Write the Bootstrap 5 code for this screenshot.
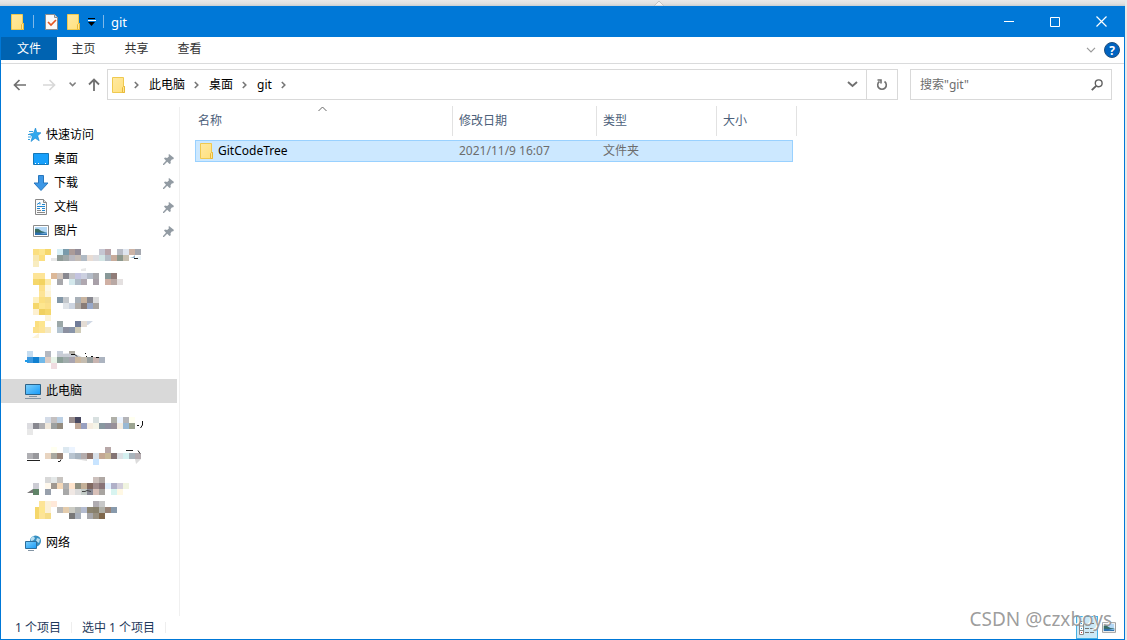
<!DOCTYPE html>
<html lang="zh-CN">
<head>
<meta charset="utf-8">
<meta name="viewport" content="width=device-width, initial-scale=1">
<title>git</title>
<link href="https://cdn.jsdelivr.net/npm/bootstrap@5.3.0/dist/css/bootstrap.min.css" rel="stylesheet">
<style>
body{font-family:"Noto Sans","Noto Sans CJK SC",sans-serif;font-size:12px;line-height:18px;color:#000;background:#e9e9e9}
button,input{font:inherit}
svg{display:block;flex:none}
a{color:inherit;text-decoration:none}
.shell{min-height:100vh;padding-right:2px}
.backdrop{height:6px;background:linear-gradient(#e9e9e9,#e0e0e0 60%,#c8ced2)}
.backdrop svg{margin-left:58%}
.win{border:1px solid #0078d7;border-top:0;background:#fff}
.titlebar{height:31px;background:#0078d7;color:#fff;padding-left:8px}
.caption{font-size:13px}
.vbar{width:2px;height:13px;border-left:1px solid #7fb8e8;margin:0 10px 0 8px}
.vbar.last{margin:0 6px 0 7px}
.plain{border:0;background:none;padding:0;display:flex;align-items:center;justify-content:center;color:inherit}
.cap{width:46px;height:31px}
.ribbon{height:27px;border-bottom:1px solid #dadbdc}
.ribbon a{height:23px;line-height:24px;color:#333;width:53px;text-align:center}
.ribbon a.file-tab{width:56px;background:#0063b1;color:#fff}
.navrow{padding:5px 12px 4px 8px}
.fwd{margin-left:17px}
.recent{width:7px;margin:0 12px 0 13px}
.box{height:31px;border:1px solid #d9d9d9;background:#fff}
.addr{margin-left:7px}
.addr .refresh{width:31px;align-self:stretch;border-left:1px solid #d9d9d9}
.crumb{line-height:28px}
.arrow{margin:0 10px 0 9px}
.find{width:202px;margin-left:12px}
.find input{border:0;outline:0;width:100%;color:#6d6d6d;padding:0 9px}
.find input::placeholder{color:#6d6d6d;opacity:1}
.side{width:179px;border-right:1px solid #f0f0f0;margin-top:3px;padding-top:16px}
.side ul{margin:0 0 8px}
.item{height:24px;width:176px;padding-left:24px}
.item.sub{padding-left:32px}
.item.cur{background:#d9d9d9}
.item .txt{margin-left:5px}
.pin{margin-left:auto;margin-right:3px}
.files{width:602px;margin:2px 0 0 15px;table-layout:fixed;border-collapse:separate;border-spacing:0}
.files th{height:30px;font-weight:400;color:#4c607a;padding:0 0 0 6px;border-right:1px solid #e2e2e2;position:relative}
.files th:first-child{padding-left:3px}
.files .gap td{height:4px;padding:0}
.files .pick{position:relative}
.files .pick td{height:22px;padding:0 0 0 6px;color:#6d6d6d;position:relative;z-index:1}
.files .pick td:first-child{position:static;padding-left:5px}
.files .pick td:first-child::before{content:"";position:absolute;inset:0 4px 0 0;background:#cce8ff;border:1px solid #99d1ff}
.files .pick a{position:relative;z-index:1;color:#000}
.sort{position:absolute;left:123px;top:0}
.status{height:23px;color:#1e395b;padding-left:14px}
.status .sep{width:1px;height:11px;background:#eee;margin:0 10px}
.view{width:22px;height:23px}
.view.on{background:#cce8f6;border:1px solid #45b0e4}
.mark-text{position:absolute;right:15px;bottom:8px;font-family:"Noto Sans",sans-serif;font-size:19px;line-height:26px;color:rgba(145,145,145,.9);text-shadow:-1px -1px 0 #fff}
</style>
</head>
<body>
<svg width="0" height="0" class="position-absolute" aria-hidden="true">
<defs>
<linearGradient id="fg" x1="0" y1="0" x2="1" y2="1"><stop offset="0" stop-color="#ffe9a2"/><stop offset="1" stop-color="#ffe07c"/></linearGradient>
<linearGradient id="bg" x1="0" y1="0" x2="1" y2="1"><stop offset="0" stop-color="#7fd0fa"/><stop offset="1" stop-color="#169bfa"/></linearGradient>
<symbol id="folder" viewBox="0 0 14 16"><path d="M.5.5h11v9h1v6H.5z" fill="url(#fg)" stroke="#efc94f"/><path d="M10.500 15.500v-5l1-1h1v6z" fill="#ffe68f" stroke="#e8b93a"/></symbol>
<symbol id="pin" viewBox="0 0 11 11"><path d="M6 0l5 4-1 1.500-1-.2-1.500 2 .3 2L6.500 10 4.200 7.800 1 11H0v-1l3-3.300L1 4.500 2 3.600l2.200.3L6 2.300 5.500 1z" fill="#929ba3"/></symbol>
<symbol id="chev" viewBox="0 0 5 8"><path d="M.8 1l3 3-3 3" fill="none" stroke="#777" stroke-width="1.600"/></symbol>
<symbol id="photo" viewBox="0 0 16 12"><path d="M.5.500h15v11H.5z" fill="#fff" stroke="#8b8b8b"/><path d="M2 2h12v8H2z" fill="#b4d8f5"/><path d="M2 4q3-1 5 1t7 2v1H2z" fill="#396d63"/><path d="M2 7.500h12V10H2z" fill="#2e70ad"/><path d="M7 9l7-2v1.500z" fill="#8cc0e8"/></symbol>
</defs>
</svg>
<div class="shell d-flex flex-column position-relative">
<div class="backdrop"><svg width="12" height="6" viewBox="0 0 12 6"><path d="M1 6l5-5 5 5z" fill="#f2f2f2" stroke="#c4c4c4"/></svg></div>
<div class="win d-flex flex-column flex-grow-1">
<header class="titlebar d-flex align-items-center">
<svg width="16" height="16"><use href="#folder" x="2" width="14" height="16"/></svg><span class="vbar"></span>
<button class="plain" aria-label="属性"><svg width="13" height="16"><path d="M.5.5h9l3 3v12H.5z" fill="#fafafa" stroke="#8e8e8e"/><path d="M9.500.5v3h3" fill="#ddd" stroke="#8e8e8e"/><path d="M3 8l3 3 5-5" fill="none" stroke="#e65722" stroke-width="1.700"/></svg></button>
<button class="plain ms-2" aria-label="新建文件夹"><svg width="14" height="16"><use href="#folder" x="1" width="14" height="16"/></svg></button>
<button class="plain ms-2" aria-label="自定义"><svg width="8" height="8"><path d="M0 2.500h8" stroke="#fff"/><path d="M0 .5h7" stroke="#000"/><path d="M0 4h7L3.500 8z" fill="#000"/></svg></button>
<span class="vbar last"></span><span class="caption">git</span>
<div class="ms-auto d-flex">
<button class="plain cap" aria-label="最小化"><svg width="10" height="10"><path d="M0 4.500h10" stroke="#fff"/></svg></button>
<button class="plain cap" aria-label="最大化"><svg width="10" height="10"><path d="M.5.500h9v9h-9z" fill="none" stroke="#fff"/></svg></button>
<button class="plain cap" aria-label="关闭"><svg width="11" height="11"><path d="M.5.500l10 10M10.500.500l-10 10" stroke="#fff" stroke-width="1.200"/></svg></button>
</div>
</header>
<nav class="ribbon d-flex"><a href="#" class="file-tab">文件</a><a href="#">主页</a><a href="#">共享</a><a href="#">查看</a>
<button class="plain ms-auto me-2" aria-label="展开功能区"><svg width="10" height="6"><path d="M1 .8l4 4 4-4" fill="none" stroke="#999" stroke-width="1.200"/></svg></button>
<button class="plain me-1" aria-label="帮助"><svg width="16" height="16"><circle cx="8" cy="8" r="7.500" fill="#0063c0" stroke="#204f7d"/><text x="8" y="12.500" text-anchor="middle" font-size="12" font-weight="700" fill="#fff">?</text></svg></button>
</nav>
<div class="navrow d-flex align-items-center">
<button class="plain ms-1" aria-label="后退"><svg width="13" height="12"><path d="M13 6H1.500M6.500 1l-5 5 5 5" fill="none" stroke="#707070" stroke-width="1.700"/></svg></button>
<button class="plain fwd" aria-label="前进"><svg width="13" height="12"><path d="M0 6h11.500M6.500 1l5 5-5 5" fill="none" stroke="#d8d8d8" stroke-width="1.700"/></svg></button>
<button class="plain recent" aria-label="最近"><svg width="7" height="5"><path d="M.6.600l3 3 3-3" fill="none" stroke="#808080" stroke-width="1.500"/></svg></button>
<button class="plain" aria-label="向上"><svg width="12" height="13"><path d="M6 13V1.500M1 6.500l5-5 5 5" fill="none" stroke="#707070" stroke-width="1.800"/></svg></button>
<div class="box addr d-flex flex-grow-1 align-items-center ps-1">
<svg width="13" height="16"><use href="#folder" width="14" height="16"/></svg>
<svg class="arrow" width="5" height="8"><use href="#chev"/></svg><a href="#" class="crumb">此电脑</a>
<svg class="arrow" width="5" height="8"><use href="#chev"/></svg><a href="#" class="crumb">桌面</a>
<svg class="arrow" width="5" height="8"><use href="#chev"/></svg><a href="#" class="crumb">git</a>
<svg class="arrow" width="5" height="8"><use href="#chev"/></svg>
<button class="plain ms-auto me-2" aria-label="历史"><svg width="11" height="7"><path d="M1 1l4.500 4L10 1" fill="none" stroke="#707070" stroke-width="1.900"/></svg></button>
<button class="plain refresh" aria-label="刷新"><svg width="12" height="12"><path d="M8.500 2.500a4.300 4.300 0 1 1-5 0M1.500 1h3.500v3.500" fill="none" stroke="#707070" stroke-width="1.600"/></svg></button>
</div>
<div class="box find d-flex align-items-center"><input type="search" aria-label="搜索" placeholder='搜索"git"'><svg class="me-2" width="12" height="12"><circle cx="7.700" cy="4.300" r="3.400" fill="none" stroke="#606060" stroke-width="1.400"/><path d="M5.200 6.800L.8 11.200" stroke="#606060" stroke-width="1.900"/></svg></div>
</div>
<main class="d-flex flex-grow-1">
<nav class="side flex-shrink-0">
<ul class="list-unstyled">
<li><a href="#" class="item d-flex align-items-center"><svg width="16" height="14" viewBox="-2 0 16 14"><path d="M8.500 0l1.300 4.500 4.200.3-3.300 3 1.500 5-4-2.600L4 13.500l1.300-4.800L2.500 6l4-.8z" fill="#2fa8ee" stroke="#1686d0" stroke-width=".6"/><path d="M2 3.500h4M1 6.500h3M1 9h3M1 11.500h2" stroke="#38a0dd"/></svg><span class="txt">快速访问</span></a></li>
<li><a href="#" class="item sub d-flex align-items-center"><svg width="16" height="12"><path d="M.5.500h15v11H.5z" fill="#18a0fb" stroke="#1478b8"/><path d="M2 10.500h1m2 0h1m6 0h1" stroke="#fff"/></svg><span class="txt">桌面</span><svg class="pin" width="11" height="11"><use href="#pin"/></svg></a></li>
<li><a href="#" class="item sub d-flex align-items-center"><svg width="16" height="16"><path d="M5.500.500h5V8h4.500l-7 7.500L1 8h4.500z" fill="#3c97e6" stroke="#2877bd"/></svg><span class="txt">下载</span><svg class="pin" width="11" height="11"><use href="#pin"/></svg></a></li>
<li><a href="#" class="item sub d-flex align-items-center"><svg width="16" height="16"><path d="M2.500.500h8l3 3v12h-11z" fill="#fafafa" stroke="#888"/><path d="M10.500.500v3h3" fill="#ddd" stroke="#888"/><path d="M4 5.500l3-2v2M9 5.500h3M4 7.500h8M4 9.500h3M9 9.500h3M9 11.500h3" fill="none" stroke="#2086d0"/><path d="M4 11.500h4M4 13.500h8" stroke="#888"/></svg><span class="txt">文档</span><svg class="pin" width="11" height="11"><use href="#pin"/></svg></a></li>
<li><a href="#" class="item sub d-flex align-items-center"><svg width="16" height="12"><use href="#photo"/></svg><span class="txt">图片</span><svg class="pin" width="11" height="11"><use href="#pin"/></svg></a></li>
<li><svg class="tiles" width="176" height="96" viewBox="1 243 176 96" data-rows="249:0 fbdf80 fde68f f5d76b . d6eef5 7a9bab ab9b98 918c98 . . . c5c6d2 b8a3a8 . b8bcc6 dfe5ee cbb3a6 a5a8b0|255:0 f8e8b0 fbdf80 . . 909c98 a0a8a8 b8b8c0 c4bcb6 b0bac4 e8dcd4 dcdce0 d2e4e4 b4bcc6 c8ac9c 8c988c c8c0b0|261:0 f8ecc0|273:0 fde497 fde497 . dcb898 d0c4bc 888890 c4c4c8 c4c4e0 ccd0e0 b4bcc8 a8a8ac . 889898 907c78|279:0 f5d76b f3d360 fdeaa8 . a8a8ac . d4e8ec b0bcc8 b0a8b0 . a8a0a8 . d0b0a4 b8a8a4 e4e0e0|285:1 fde08a fdf8e4|291:1 fde497 fdf4d8|297:0 fdf0c0 fbdf80 f5dc88 . 8498a8 c4c8cc . a8b0b8 c8b4a0 888890 dcdcdc|303:0 f5d76b fde68f fbe08a . . e0e4e8 ccd4e0 b0aca8 887c78 98a8c8 a8a4a0|309:0 fdf0d0 f0d060 f5d76b|315:2 fdf4d8|321:1 fde68f . . 9ca8a8 . . 707c98 e4dcd4|327:0 fbe08a fde497 f5e8c0 . b4c4d0 8c90a0 8894a8 d0ccb8"><path d="M51 258h6v3h-6zM81 269l5-1v3h-5z" fill="#e8e8e8"/><path d="M129 258q4 0 6-3v3z" fill="#8cb0c8"/><path d="M136 257l5-1v4h-3z" fill="#eaf6fc"/><path d="M134 258.500h4" stroke="#222"/><path d="M35 321h4v6h-4z" fill="#fbdf80"/><path d="M87 321h6l-5 4h-1z" fill="#d0d8e4"/><path d="M32 338h7v-5z" fill="#fdf4d8"/></svg></li>
</ul>
<ul class="list-unstyled"><li><svg class="tiles" width="176" height="24" viewBox="1 347 176 24" data-rows="351:-1 c4dcf0 . . b4b8c0 . c8d0dc . b0aca4|357:-1 3c98e0 1080d0 70b8e8 dcccc4 e8f4e8 8ca098 a0acac a8a4b0 ccb8a0 c4bcb0 98a0a0 c8b4b0 acb4c0|363:3 f0dce0"><path d="M57 357v-3q12-1 18 0l7 3z" fill="#c8ccd4"/><path d="M71 354.500h4l2 2M85 353.500h1m0 3h1m4 0h2m3 1h3" fill="none" stroke="#111"/><path d="M25 361h4" stroke="#209be8" stroke-width="2"/></svg></li></ul>
<ul class="list-unstyled"><li><a href="#" class="item cur d-flex align-items-center"><svg width="16" height="16"><path d="M.5 1.500h15v10H.5z" fill="url(#bg)" stroke="#2c6288"/><path d="M4 13.500h8M0 15.500h16" stroke="#8495a4"/></svg><span class="txt">此电脑</span></a></li></ul>
<ul class="list-unstyled"><li><svg class="tiles" width="176" height="112" viewBox="1 411 176 112" data-rows="417:2 d4dce8 c4c0c0 bcd0e4 . 988c8c 484860 . . d8e0e0 . . b0b0a8 ecf4ff b4b4b8 fffff0|423:-1 dcdce0 888890 b0b0b4 f0e8dc 9ca0a0 948c80 . . c0a898 98a0c0 f4ece0 f4f4e8 8898a0 9090a0 989098 f4ece0 98b8d4 9ca490|429:-1 e8e8e8|447:3 fffff0 . dce8f0 ecf4ff . . . . . b8a8a8|453:-1 b0b0b4 98989c . e8d4c0 a8a8a0 988478 . b8c4d0 a8b4c0 b4acac 907870 d8e0e8 c4a894 c8b898 847474 dce0e4 d4f0f0 a8b4bc b4acb0|459:10 c8e4ff|477:2 d8d8d8 e4e8e8 c8c4c0 . . . . . ccc0bc b0a8a4|483:0 ccccd4 . fff8ec a09890 f4d8b8 b0b0b0 ffe4cc 909080 c4b098 806860 a08c8c 887478 e0f0ff b0b0c8 d4d0dc f0f4e0|489:0 608468 . 98a0ac . . a8a8a8 f0e8e4 dcdcdc c4ccc8 888894 d8c0b8 a8a4a0 . d8f4f0 fff8e4|501:1 fde497 fbf0d8 ffe8d8 . . . . . . b0acb0 c8c8c8|507:1 fde68f fbf0d8 . b8b8b8 e4ccac ccccc4 b0b4b4 b4bcd0 8c8470 88806c b0b0a8 988478 889aac|513:1 fde497 f5dc88 . . . 787878 a8b0bc . a8a8ac 989080 80684c"><path d="M137 425.500h2M142.500 421v4l-2 3" fill="none" stroke="#111"/><path d="M27 460.500h13M58 461.500h2l1-2M126 450.500h7M138 450.500l2 3" fill="none" stroke="#222"/><path d="M75 459h12v2zM135 459h6l-5 5z" fill="#dcdcdc"/><path d="M27 493l6-4v4z" fill="#777"/><path d="M82 491.500h3l2-1 4 1" fill="none" stroke="#444"/><path d="M35 507h4v12h-4z" fill="#f5d76b"/></svg></li></ul>
<ul class="list-unstyled"><li><a href="#" class="item d-flex align-items-center"><svg width="16" height="16"><circle cx="10.500" cy="6" r="5.500" fill="#358fc2"/><path d="M8 1q-3 2-2 5 3 0 4-3zM12 3l3 1-1 4-3-2z" fill="#b8def0"/><path d="M.5 6.500h11v7H.5z" fill="url(#bg)" stroke="#2c6e9c"/><path d="M3 15.500h6" stroke="#8495a4"/></svg><span class="txt">网络</span></a></li></ul>
</nav>
<section class="flex-grow-1">
<table class="files">
<colgroup><col><col style="width:144px"><col style="width:120px"><col style="width:80px"></colgroup>
<thead><tr><th scope="col">名称<svg class="sort" width="9" height="6"><path d="M.5 5l4-4 4 4" fill="none" stroke="#666"/></svg></th><th scope="col">修改日期</th><th scope="col">类型</th><th scope="col">大小</th></tr></thead>
<tbody><tr class="gap"><td colspan="4"></td></tr>
<tr class="pick"><td><a href="#" class="d-flex align-items-center"><svg width="14" height="16" class="me-1"><use href="#folder" width="14" height="16"/></svg><span>GitCodeTree</span></a></td><td>2021/11/9 16:07</td><td>文件夹</td><td></td></tr></tbody>
</table>
</section>
</main>
<footer class="status d-flex align-items-center"><span>1 个项目</span><span class="sep"></span><span>选中 1 个项目</span><span class="sep"></span>
<div class="ms-auto d-flex me-1">
<button class="plain view on" aria-label="详细信息"><svg width="16" height="14"><path d="M.5.500h4v13h-4zM.5 5h4M.5 9.500h4" fill="#fff" stroke="#888"/><path d="M2 2.500h1" stroke="#39c"/><path d="M2 7.500h1" stroke="#39c"/><path d="M2 11.500h1" stroke="#c33"/><path d="M6 2.500h4m1 0h4M6 7.500h4m1 0h4M6 11.500h4m1 0h4" stroke="#777"/></svg></button>
<button class="plain view" aria-label="大缩略图"><svg width="14" height="11"><use href="#photo"/></svg></button>
</div></footer>
</div>
<div class="mark-text">CSDN @czxboys</div>
</div>
<script src="https://cdn.jsdelivr.net/npm/bootstrap@5.3.0/dist/js/bootstrap.bundle.min.js"></script>
<script>
// Each row is "y:firstColumn colour colour ..."; a dot leaves a cell empty.
document.querySelectorAll('.tiles').forEach(function (svg) {
  svg.dataset.rows.split('|').forEach(function (row) {
    var parts = row.split(' '), head = parts.shift().split(':');
    parts.forEach(function (c, i) {
      if (c === '.') return;
      var r = document.createElementNS('http://www.w3.org/2000/svg', 'rect');
      r.setAttribute('x', 33 + 6 * (+head[1] + i));
      r.setAttribute('y', head[0]);
      r.setAttribute('width', 6);
      r.setAttribute('height', 6);
      r.setAttribute('fill', '#' + c);
      svg.insertBefore(r, svg.firstChild);
    });
  });
});
</script>
</body>
</html>
